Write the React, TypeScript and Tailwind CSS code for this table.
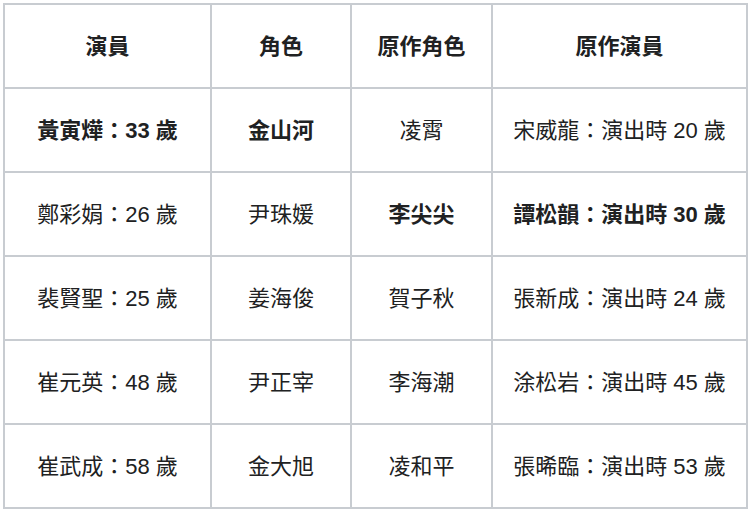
import React from 'react';

type Cell = { text: string; bold?: boolean };

const header = ['演員', '角色', '原作角色', '原作演員'];

const rows: Cell[][] = [
    [{ text: '黃寅燁：33 歲', bold: true }, { text: '金山河', bold: true }, { text: '凌霄' }, { text: '宋威龍：演出時 20 歲' }],
    [{ text: '鄭彩娟：26 歲' }, { text: '尹珠媛' }, { text: '李尖尖', bold: true }, { text: '譚松韻：演出時 30 歲', bold: true }],
    [{ text: '裴賢聖：25 歲' }, { text: '姜海俊' }, { text: '賀子秋' }, { text: '張新成：演出時 24 歲' }],
    [{ text: '崔元英：48 歲' }, { text: '尹正宰' }, { text: '李海潮' }, { text: '涂松岩：演出時 45 歲' }],
    [{ text: '崔武成：58 歲' }, { text: '金大旭' }, { text: '凌和平' }, { text: '張晞臨：演出時 53 歲' }],
];

export default function App() {
    return (
        <div className="w-[750px] h-[512px] bg-white pt-[3px] pl-[3px]"
            style={{ fontFamily: '"Liberation Sans", "Noto Sans CJK TC", sans-serif' }}>
            <table className="table-fixed border-collapse w-[743px] text-[22px] text-[#202122]">
                <colgroup>
                    <col className="w-[207px]" />
                    <col className="w-[140px]" />
                    <col className="w-[141px]" />
                    <col className="w-[255px]" />
                </colgroup>
                <thead>
                    <tr className="h-[84px]">
                        {header.map((h) => (
                            <th key={h} className="border-2 border-[#c8ccd1] text-center align-middle font-bold p-0">
                                {h}
                            </th>
                        ))}
                    </tr>
                </thead>
                <tbody>
                    {rows.map((row, i) => (
                        <tr key={i} className="h-[84px]">
                            {row.map((c, j) => (
                                <td key={j} className={`border-2 border-[#c8ccd1] text-center align-middle p-0 whitespace-nowrap ${c.bold ? 'font-bold' : 'font-normal'}`}>
                                    {c.text}
                                </td>
                            ))}
                        </tr>
                    ))}
                </tbody>
            </table>
        </div>
    );
}
